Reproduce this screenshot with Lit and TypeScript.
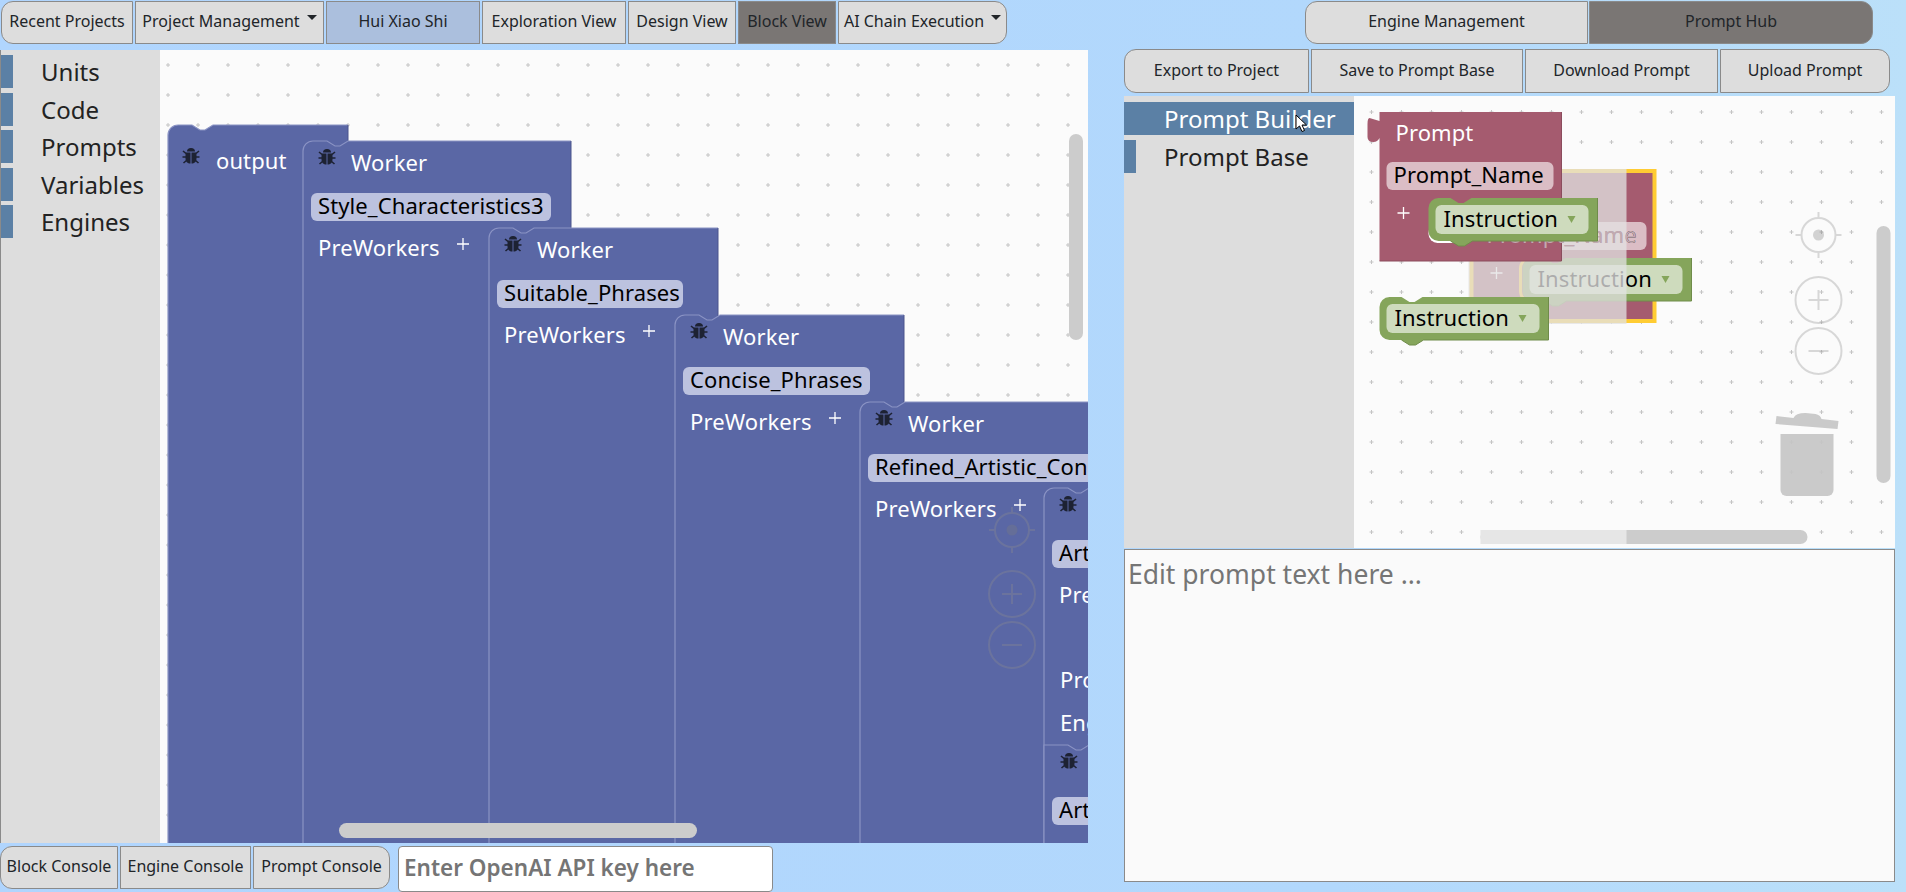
import { css, html, svg, LitElement } from "lit";
import { customElement } from "lit/decorators.js";

const BLUE = "#5a67a5";
const MAROON = "#a55b6f";
const GREEN = "#85a55b";

function grid(x0: number, y0: number, cols: number, rows: number) {
  const out = [];
  for (let r = 0; r < rows; r++) {
    for (let c = 0; c < cols; c++) {
      const x = x0 + c * 30;
      const y = y0 + r * 30;
      out.push(`M${x - 2},${y}h4M${x},${y - 2}v4`);
    }
  }
  return svg`<path d=${out.join("")} stroke="#c4c4c4" stroke-width="1" fill="none" />`;
}

function bug(cx: number, cy: number) {
  return svg`<g transform="translate(${cx},${cy})">
    <path d="M-8,-5l3,2.5M8,-5l-3,2.5M-8.5,1h4M8.5,1h-4M-7.5,7l3,-2.5M7.5,7l-3,-2.5" stroke="#1d2233" stroke-width="1.6" fill="none" />
    <path d="M-4,-4.5a4,3.6 0 0 1 8,0z" fill="#1d2233" />
    <path d="M-5.5,-3.5h5v11c-3,0 -5,-2 -5,-5zM0.5,-3.5h5v6c0,3 -2,5 -5,5z" fill="#1d2233" />
  </g>`;
}

function plus(x: number, y: number) {
  return svg`<path d="M${x - 6},${y}h12M${x},${y - 6}v12" stroke="#fff" stroke-width="1.3" fill="none" />`;
}

// Worker style block: rounded corner and notch on top, runs down off the canvas
function workerShape(x: number, y: number, w: number, b: number, flat = false) {
  const corner = flat ? `V${y}` : `V${y + 10}a10,10 0 0 1 10,-10`;
  const d = `M${x},${b}${corner}H${x + 24}l8,5h5l8,-5H${x + w}`;
  return svg`<path d="${d}V${b}Z" fill=${BLUE} />
    <path d=${d} fill="none" stroke="#8a93c4" stroke-width="1.2" />
    <path d="M${x + w},${y}V${b}" stroke="#4a558c" stroke-width="1" fill="none" />`;
}

function field(x: number, y: number, w: number, label: string, fill: string, ink = "#000") {
  return svg`<rect x=${x} y=${y} width=${w} height="28" rx="6" fill=${fill} />
    <text x=${x + 7} y=${y + 21} class="t" fill=${ink}>${label}</text>`;
}

function worker(x: number, y: number, w: number, fw: number, name: string) {
  return svg`
    ${workerShape(x, y, w, 860)}
    ${bug(x + 24, y + 16)}
    <text x=${x + 48} y=${y + 30} class="t" fill="#fff">Worker</text>
    ${field(x + 8, y + 52, fw, name, "#bcc2df")}
    <text x=${x + 15} y=${y + 115} class="t" fill="#fff">PreWorkers</text>
    ${plus(x + 160, y + 103)}`;
}

function controls(cx: number, ty: number, py: number, my: number) {
  return svg`<g fill="none" stroke="#8f8f8f" stroke-width="2" opacity="0.32">
    <circle cx=${cx} cy=${ty} r="17" />
    <path d="M${cx},${ty - 23}v6M${cx},${ty + 23}v-6M${cx - 23},${ty}h6M${cx + 23},${ty}h-6" />
    <circle cx=${cx} cy=${ty} r="5.5" fill="#7d7d7d" stroke="none" />
    <circle cx=${cx} cy=${py} r="23" />
    <path d="M${cx - 10},${py}h20M${cx},${py - 10}v20" />
    <circle cx=${cx} cy=${my} r="23" />
    <path d="M${cx - 10},${my}h20" />
  </g>`;
}

function instruction(x: number, y: number) {
  const d = `M${x + 10},${y}H${x + 22}l8,5h5l8,-5H${x + 169}V${y + 43}H${x + 44}l-8,5h-6l-8,-5H${x + 10}a10,10 0 0 1 -10,-10V${y + 10}a10,10 0 0 1 10,-10z`;
  return svg`<path d=${d} fill=${GREEN} />
    <path d="M${x + 169},${y}V${y + 43}H${x + 44}l-8,5h-6l-8,-5" fill="none" stroke="#6f8c4a" stroke-width="1" />
    <rect x=${x + 7} y=${y + 7} width="153" height="29" rx="6" fill="#cedbbd" />
    <text x=${x + 15} y=${y + 29} class="t" fill="#000">Instruction</text>
    <path d="M${x + 139},${y + 18}h8l-4,7z" fill=${GREEN} />`;
}

function promptBlock(x: number, y: number) {
  return svg`<path d="M${x},${y}H${x + 182}V${y + 149}H${x}V${y + 26}q-2,4 -6,4q-6,0 -6,-5v-13q0,-6 2,-6l10,3z" fill=${MAROON} />
    <path d="M${x + 182},${y}V${y + 149}H${x}" fill="none" stroke="#8b4c5d" stroke-width="1" />`;
}

@customElement("block-canvas")
export class BlockCanvas extends LitElement {
  static styles = css`
    :host {
      display: block;
      flex: 1;
      background: #fbfbfb;
      overflow: hidden;
    }
    svg {
      display: block;
      width: 100%;
      height: 100%;
    }
    .t {
      font: 22px "Noto Sans", sans-serif;
      letter-spacing: 0.1px;
    }
  `;

  render() {
    return html`<svg viewBox="160 50 928 793">
      ${grid(168, 65, 31, 27)}
      ${workerShape(168, 125, 180, 860)}
      ${bug(191, 156)}
      <text x="216" y="169" class="t" fill="#fff">output</text>
      ${worker(303, 141, 268, 240, "Style_Characteristics3")}
      ${worker(489, 228, 229, 186, "Suitable_Phrases")}
      ${worker(675, 315, 229, 187, "Concise_Phrases")}
      ${worker(860, 402, 300, 300, "Refined_Artistic_Concepts")}
      ${worker(1044, 488, 200, 190, "Artistic_Style")}
      <text x="1060" y="688" class="t" fill="#fff">Prompt</text>
      <text x="1060" y="731" class="t" fill="#fff">Engine</text>
      ${workerShape(1044, 745, 200, 860, true)}
      ${bug(1069, 761)}
      ${field(1052, 797, 190, "Artistic_Style", "#bcc2df")}
      ${controls(1012, 530, 594, 645)}
      <rect x="1069" y="134" width="14" height="206" rx="7" fill="#ccc" />
      <rect x="339" y="823" width="358" height="15" rx="7.5" fill="#ccc" />
    </svg>`;
  }
}

@customElement("prompt-canvas")
export class PromptCanvas extends LitElement {
  static styles = css`
    :host {
      display: block;
      flex: 1;
      background: #fbfbfb;
      overflow: hidden;
    }
    svg {
      display: block;
      width: 100%;
      height: 100%;
    }
    .t {
      font: 22px "Noto Sans", sans-serif;
      letter-spacing: 0.1px;
    }
  `;

  render() {
    return html`<svg viewBox="1354 96 540 452">
      ${grid(1371, 112, 18, 15)}
      <rect x="1471" y="171" width="183" height="150" fill=${MAROON} stroke="#fc3" stroke-width="4" />
      ${field(1479, 222, 167, "Prompt_Name", "#dbbdc5")}
      <path d="M1545,257.5H1531a11,11 0 0 0 -11,11V291a11,11 0 0 0 11,11H1545" fill="none" stroke="#fc3" stroke-width="3" />
      ${plus(1496, 273)}
      ${instruction(1522, 258)}
      <rect x="1480" y="530" width="327" height="14" rx="7" fill="#ccc" />
      <!-- flyout veil: greys what it covers, the canvas itself stays pale -->
      <rect x="1468" y="169" width="158" height="155" fill="#e2e2e2" opacity="0.76" />
      <rect x="1480" y="530" width="146" height="14" fill="#e6e6e6" />
      ${promptBlock(1379, 112)}
      <text x="1395" y="141" class="t" fill="#fff">Prompt</text>
      ${field(1386, 162, 167, "Prompt_Name", "#dbbdc5")}
      ${plus(1403, 213)}
      <rect x="1428" y="224" width="44" height="19" rx="9" fill="#fff" />
      <text x="1486" y="243" class="t" fill="#c2a9b1">Prompt_Name</text>
      ${instruction(1428, 198)}
      ${instruction(1379, 297)}
      ${controls(1818, 235, 300, 351)}
      <g fill="#c6c6c6" opacity="0.92">
        <path d="M1776,416L1793,418Q1795,413 1805,413L1815,414Q1820,415 1821,419L1838,421L1837,429L1775,424Z" />
        <path d="M1780,434H1833V490a6,6 0 0 1 -6,6H1786a6,6 0 0 1 -6,-6Z" />
      </g>
      <rect x="1876" y="226" width="14" height="257" rx="7" fill="#ccc" />
    </svg>`;
  }
}

type Btn = { label: string; w: number; tone?: string; caret?: boolean };

const NAV: Btn[] = [
  { label: "Recent Projects", w: 132 },
  { label: "Project Management", w: 189 },
  { label: "Hui Xiao Shi", w: 154, tone: "accent" },
  { label: "Exploration View", w: 144 },
  { label: "Design View", w: 108 },
  { label: "Block View", w: 98, tone: "dark" },
  { label: "AI Chain Execution", w: 169, caret: true },
];
NAV[1].caret = true;

const HUB: Btn[] = [
  { label: "Engine Management", w: 283 },
  { label: "Prompt Hub", w: 284, tone: "dark" },
];
const ACTIONS: Btn[] = [
  { label: "Export to Project", w: 185 },
  { label: "Save to Prompt Base", w: 212 },
  { label: "Download Prompt", w: 193 },
  { label: "Upload Prompt", w: 170 },
];
const CONSOLES: Btn[] = [
  { label: "Block Console", w: 118 },
  { label: "Engine Console", w: 131 },
  { label: "Prompt Console", w: 137 },
];

@customElement("app-root")
export class AppRoot extends LitElement {
  static styles = css`
    :host {
      display: flex;
      width: 1906px;
      height: 892px;
      overflow: hidden;
      background: linear-gradient(90deg, #b0d5fe 0%, #b2d8fc 70%, #bbe0f9 100%);
      font-family: "Noto Sans", sans-serif;
      color: #212529;
    }
    .left {
      width: 1088px;
      flex: none;
    }
    .right {
      width: 771px;
      margin-left: 36px;
      flex: none;
      position: relative;
    }
    .group {
      display: flex;
      gap: 2px;
      height: 43px;
      margin-top: 1px;
    }
    .left > .group {
      padding-left: 1px;
    }
    .hub {
      gap: 1px;
      margin-left: 181px;
    }
    .actions {
      height: 44px;
      margin-top: 5px;
    }
    .console {
      margin-top: 3px;
      padding-left: 0 !important;
    }
    .group button {
      box-sizing: border-box;
      flex: none;
      padding: 0 0 3px;
      font: 16px "Noto Sans", sans-serif;
      color: #212529;
      background: #ddd;
      border: 1px solid #8a8a8a;
      border-radius: 0;
      display: flex;
      align-items: center;
      justify-content: center;
      white-space: nowrap;
    }
    .group button:first-child {
      border-radius: 12px 0 0 12px;
    }
    .group button:last-of-type {
      border-radius: 0 12px 12px 0;
    }
    .group button.accent {
      background: #abbfdd;
    }
    .group button.dark {
      background: #7a7674;
    }
    .caret {
      width: 0;
      height: 0;
      margin: -7px 0 0 7px;
      border-top: 5px solid #212529;
      border-left: 5px solid transparent;
      border-right: 5px solid transparent;
    }
    .main {
      display: flex;
      height: 793px;
      margin-top: 6px;
      border-left: 1px solid #8a8a8a;
      box-sizing: border-box;
    }
    .toolbox {
      flex: none;
      background: #ddd;
      display: flex;
      flex-direction: column;
      box-sizing: border-box;
    }
    .main .toolbox {
      width: 159px;
      padding-top: 5px;
      gap: 4.5px;
    }
    .bench {
      display: flex;
      height: 452px;
      margin-top: 3px;
    }
    .bench .toolbox {
      width: 230px;
      padding-top: 6px;
      gap: 5px;
    }
    .cat {
      height: 33px;
      line-height: 34px;
      font-size: 24px;
      color: #222;
      border-left: 12px solid #5b80a5;
      padding-left: 28px;
    }
    .cat.on {
      background: #5b80a5;
      color: #fff;
    }
    input {
      box-sizing: border-box;
      width: 375px;
      height: 46px;
      margin-left: 6px;
      padding: 0 5px 3px;
      border: 1px solid #8a8a8a;
      border-radius: 4px;
      background: #fff;
      font: 600 22.5px "Noto Sans", sans-serif;
    }
    textarea {
      display: block;
      box-sizing: border-box;
      width: 771px;
      height: 333px;
      margin-top: 1px;
      padding: 6px 3px;
      border: 1px solid #8a8a8a;
      border-radius: 0;
      background: #fafafa;
      resize: none;
      font: 26.5px "Noto Sans", sans-serif;
    }
    .pointer {
      position: absolute;
      left: 171px;
      top: 114px;
    }
  `;

  private buttons(list: Btn[]) {
    return list.map(
      (b) => html`<button class=${b.tone ?? ""} style="width:${b.w}px">
        ${b.label}${b.caret ? html`<span class="caret"></span>` : ""}
      </button>`
    );
  }

  render() {
    return html`
      <div class="left">
        <div class="group">${this.buttons(NAV)}</div>
        <div class="main">
          <div class="toolbox">
            ${["Units", "Code", "Prompts", "Variables", "Engines"].map(
              (c) => html`<div class="cat">${c}</div>`
            )}
          </div>
          <block-canvas></block-canvas>
        </div>
        <div class="group console">
          ${this.buttons(CONSOLES)}
          <input placeholder="Enter OpenAI API key here" />
        </div>
      </div>
      <div class="right">
        <div class="group hub">${this.buttons(HUB)}</div>
        <div class="group actions">${this.buttons(ACTIONS)}</div>
        <div class="bench">
          <div class="toolbox">
            <div class="cat on">Prompt Builder</div>
            <div class="cat">Prompt Base</div>
          </div>
          <prompt-canvas></prompt-canvas>
        </div>
        <textarea placeholder="Edit prompt text here ..."></textarea>
        <svg class="pointer" width="13" height="19" viewBox="0 0 13 19">
          <path d="M1,1V15L4.5,12L7,17.5L9.5,16.5L7,11H11.5Z" fill="#fff" stroke="#000" stroke-width="1" />
        </svg>
      </div>
    `;
  }
}
